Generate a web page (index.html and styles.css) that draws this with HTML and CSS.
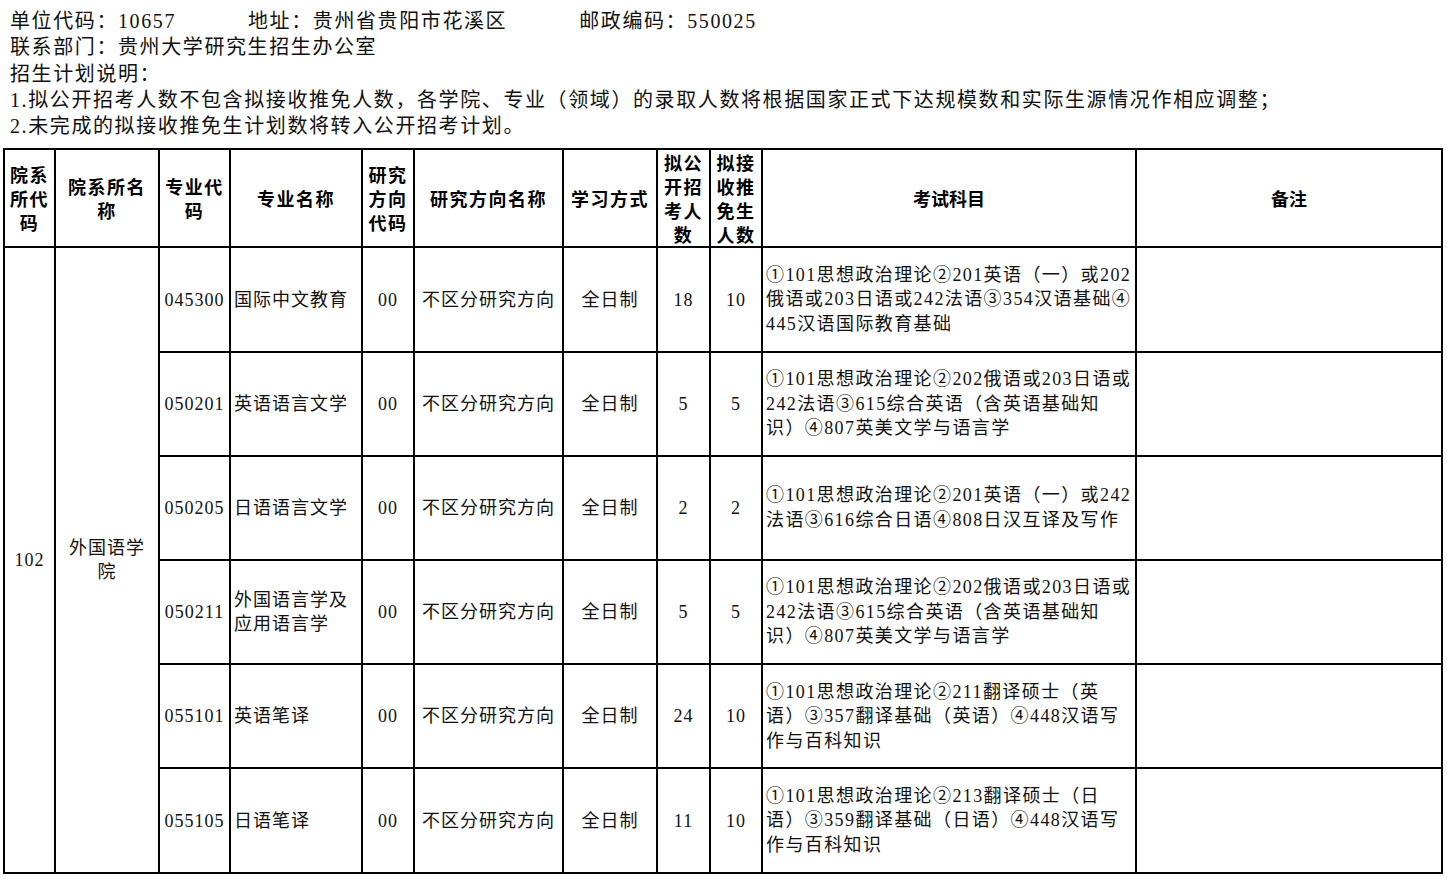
FILE: index.html
```html
<!DOCTYPE html>
<html lang="zh-CN">
<head>
<meta charset="utf-8">
<title>招生计划</title>
<link rel="stylesheet" href="styles.css">
</head>
<body>
<div class="intro">
  <p><span class="field">单位代码：10657</span><span class="field">地址：贵州省贵阳市花溪区</span><span>邮政编码：550025</span></p>
  <p>联系部门：贵州大学研究生招生办公室</p>
  <p>招生计划说明：</p>
  <p>1.拟公开招考人数不包含拟接收推免人数，各学院、专业（领域）的录取人数将根据国家正式下达规模数和实际生源情况作相应调整；</p>
  <p>2.未完成的拟接收推免生计划数将转入公开招考计划。</p>
</div>
<table class="plan">
  <colgroup>
    <col class="c1"><col class="c2"><col class="c3"><col class="c4"><col class="c5"><col class="c6"><col class="c7"><col class="c8"><col class="c9"><col class="c10"><col class="c11">
  </colgroup>
  <thead>
    <tr class="head">
      <th>院系<br>所代<br>码</th>
      <th>院系所名<br>称</th>
      <th>专业代<br>码</th>
      <th>专业名称</th>
      <th>研究<br>方向<br>代码</th>
      <th>研究方向名称</th>
      <th>学习方式</th>
      <th>拟公<br>开招<br>考人<br>数</th>
      <th>拟接<br>收推<br>免生<br>人数</th>
      <th class="tight">考试科目</th>
      <th class="tight">备注</th>
    </tr>
  </thead>
  <tbody>
    <tr class="row">
      <td rowspan="6" class="ctr">102</td>
      <td rowspan="6" class="ctr">外国语学<br>院</td>
      <td class="ctr">045300</td>
      <td class="lft">国际中文教育</td>
      <td class="ctr">00</td>
      <td class="ctr">不区分研究方向</td>
      <td class="ctr">全日制</td>
      <td class="ctr">18</td>
      <td class="ctr">10</td>
      <td class="exam">①101思想政治理论②201英语（一）或202<br>俄语或203日语或242法语③354汉语基础④<br>445汉语国际教育基础</td>
      <td></td>
    </tr>
    <tr class="row">
      <td class="ctr">050201</td>
      <td class="lft">英语语言文学</td>
      <td class="ctr">00</td>
      <td class="ctr">不区分研究方向</td>
      <td class="ctr">全日制</td>
      <td class="ctr">5</td>
      <td class="ctr">5</td>
      <td class="exam">①101思想政治理论②202俄语或203日语或<br>242法语③615综合英语（含英语基础知<br>识）④807英美文学与语言学</td>
      <td></td>
    </tr>
    <tr class="row">
      <td class="ctr">050205</td>
      <td class="lft">日语语言文学</td>
      <td class="ctr">00</td>
      <td class="ctr">不区分研究方向</td>
      <td class="ctr">全日制</td>
      <td class="ctr">2</td>
      <td class="ctr">2</td>
      <td class="exam">①101思想政治理论②201英语（一）或242<br>法语③616综合日语④808日汉互译及写作</td>
      <td></td>
    </tr>
    <tr class="row">
      <td class="ctr">050211</td>
      <td class="lft">外国语言学及<br>应用语言学</td>
      <td class="ctr">00</td>
      <td class="ctr">不区分研究方向</td>
      <td class="ctr">全日制</td>
      <td class="ctr">5</td>
      <td class="ctr">5</td>
      <td class="exam">①101思想政治理论②202俄语或203日语或<br>242法语③615综合英语（含英语基础知<br>识）④807英美文学与语言学</td>
      <td></td>
    </tr>
    <tr class="row">
      <td class="ctr">055101</td>
      <td class="lft">英语笔译</td>
      <td class="ctr">00</td>
      <td class="ctr">不区分研究方向</td>
      <td class="ctr">全日制</td>
      <td class="ctr">24</td>
      <td class="ctr">10</td>
      <td class="exam">①101思想政治理论②211翻译硕士（英<br>语）③357翻译基础（英语）④448汉语写<br>作与百科知识</td>
      <td></td>
    </tr>
    <tr class="row">
      <td class="ctr">055105</td>
      <td class="lft">日语笔译</td>
      <td class="ctr">00</td>
      <td class="ctr">不区分研究方向</td>
      <td class="ctr">全日制</td>
      <td class="ctr">11</td>
      <td class="ctr">10</td>
      <td class="exam">①101思想政治理论②213翻译硕士（日<br>语）③359翻译基础（日语）④448汉语写<br>作与百科知识</td>
      <td></td>
    </tr>
  </tbody>
</table>
</body>
</html>
```

FILE: styles.css
```css
html, body {
  margin: 0;
  padding: 0;
  background: #ffffff;
}

body {
  font-family: "Liberation Serif", "Noto Sans CJK SC", serif;
  color: #111111;
}

.intro {
  padding: 8px 10px 0 10px;
  font-size: 20px;
  line-height: 26.3px;
  letter-spacing: 1.6px;
}

.intro p {
  margin: 0;
  white-space: nowrap;
}

.intro .field {
  display: inline-block;
  margin-right: 72px;
}

.plan {
  margin: 9px 0 0 3px;
  width: 1440px;
  border-collapse: collapse;
  table-layout: fixed;
  font-size: 18px;
  letter-spacing: 1px;
  line-height: 24px;
}

.plan th,
.plan td {
  border: 2px solid #000000;
  padding: 0 3px;
  vertical-align: middle;
}

.c1 { width: 51px; }
.c2 { width: 104px; }
.c3 { width: 71px; }
.c4 { width: 132px; }
.c5 { width: 52px; }
.c6 { width: 149px; }
.c7 { width: 94px; }
.c8 { width: 53px; }
.c9 { width: 52px; }
.c10 { width: 374px; }
.c11 { width: 306px; }

.head {
  height: 98px;
}

.plan th {
  font-family: "Noto Sans CJK SC", sans-serif;
  font-weight: 700;
  text-align: center;
  line-height: 24px;
  letter-spacing: 1.5px;
  color: #000000;
}

.plan th.tight {
  letter-spacing: 0;
}

.row {
  height: 104.2px;
}

.ctr {
  text-align: center;
}

.lft {
  text-align: left;
}

.exam {
  text-align: left;
  letter-spacing: 1.4px;
  line-height: 24.5px;
}
```
